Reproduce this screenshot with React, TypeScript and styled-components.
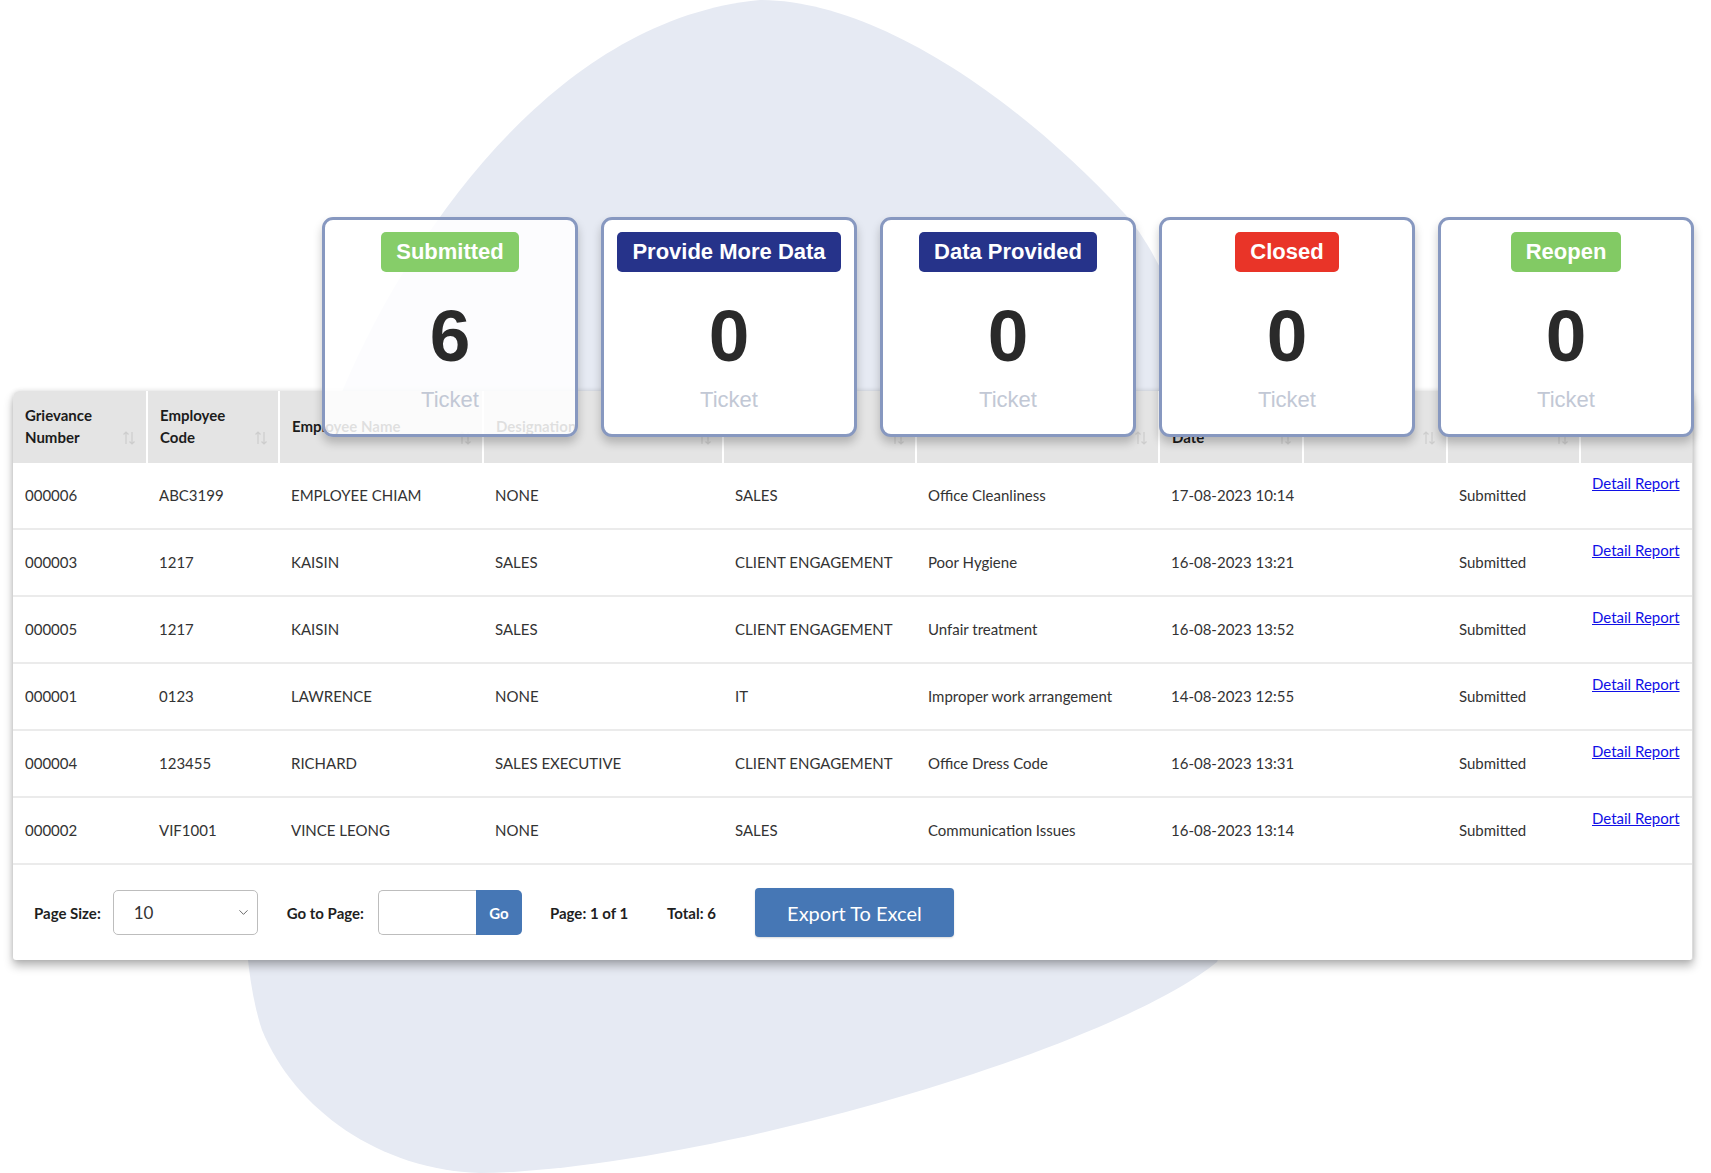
import React from "react";
import styled, { createGlobalStyle } from "styled-components";
import { ChevronDown } from "lucide-react";

const GlobalStyle = createGlobalStyle`
  html, body {
    margin: 0;
    padding: 0;
    background: #ffffff;
  }
  body {
    font-family: Lato, "Liberation Sans", sans-serif;
  }
`;

interface IStatusCard {
  label: string;
  color: string;
  count: number;
  faded?: boolean;
}

interface IGrievance {
  number: string;
  code: string;
  name: string;
  designation: string;
  department: string;
  type: string;
  submitted: string;
  closed: string;
  status: string;
}

const cards: IStatusCard[] = [
  { label: "Submitted", color: "#86cd69", count: 6, faded: true },
  { label: "Provide More Data", color: "#26338a", count: 0 },
  { label: "Data Provided", color: "#26338a", count: 0 },
  { label: "Closed", color: "#e93428", count: 0 },
  { label: "Reopen", color: "#82ca64", count: 0 },
];

const rows: IGrievance[] = [
  { number: "000006", code: "ABC3199", name: "EMPLOYEE CHIAM", designation: "NONE", department: "SALES", type: "Office Cleanliness", submitted: "17-08-2023 10:14", closed: "", status: "Submitted" },
  { number: "000003", code: "1217", name: "KAISIN", designation: "SALES", department: "CLIENT ENGAGEMENT", type: "Poor Hygiene", submitted: "16-08-2023 13:21", closed: "", status: "Submitted" },
  { number: "000005", code: "1217", name: "KAISIN", designation: "SALES", department: "CLIENT ENGAGEMENT", type: "Unfair treatment", submitted: "16-08-2023 13:52", closed: "", status: "Submitted" },
  { number: "000001", code: "0123", name: "LAWRENCE", designation: "NONE", department: "IT", type: "Improper work arrangement", submitted: "14-08-2023 12:55", closed: "", status: "Submitted" },
  { number: "000004", code: "123455", name: "RICHARD", designation: "SALES EXECUTIVE", department: "CLIENT ENGAGEMENT", type: "Office Dress Code", submitted: "16-08-2023 13:31", closed: "", status: "Submitted" },
  { number: "000002", code: "VIF1001", name: "VINCE LEONG", designation: "NONE", department: "SALES", type: "Communication Issues", submitted: "16-08-2023 13:14", closed: "", status: "Submitted" },
];

const columns: { title: string; width: number; sortable: boolean }[] = [
  { title: "Grievance Number", width: 134, sortable: true },
  { title: "Employee Code", width: 132, sortable: true },
  { title: "Employee Name", width: 204, sortable: true },
  { title: "Designation", width: 240, sortable: true },
  { title: "Department", width: 193, sortable: true },
  { title: "Grievance Type", width: 243, sortable: true },
  { title: "Submitted Date", width: 144, sortable: true },
  { title: "Closed Date", width: 144, sortable: true },
  { title: "Status", width: 133, sortable: true },
  { title: "Action", width: 113, sortable: false },
];

const Page = styled.div`
  position: relative;
  width: 1711px;
  height: 1173px;
  overflow: hidden;
  background: #ffffff;
`;

const Blob = styled.svg`
  position: absolute;
  top: 0;
  left: 0;
  width: 1711px;
  height: 1173px;
`;

const Content = styled.div`
  position: relative;
  padding-top: 217px;
`;

const CardsRow = styled.div`
  position: relative;
  z-index: 2;
  display: flex;
  gap: 23px;
  margin-left: 322px;
`;

const Card = styled.div<{ $faded?: boolean }>`
  width: 256px;
  height: 220px;
  box-sizing: border-box;
  border: 3px solid #8798c0;
  border-radius: 11px;
  background: ${(props) => (props.$faded ? "rgba(255, 255, 255, 0.86)" : "#ffffff")};
  box-shadow: 0 6px 10px rgba(0, 0, 0, 0.22);
  display: flex;
  flex-direction: column;
  align-items: center;
  font-family: "Liberation Sans", Arial, sans-serif;
`;

const Badge = styled.div<{ $bg: string }>`
  margin-top: 12px;
  height: 40px;
  padding: 0 15px;
  border-radius: 5px;
  background: ${(props) => props.$bg};
  color: #ffffff;
  font-size: 22px;
  font-weight: 700;
  display: flex;
  align-items: center;
`;

const Count = styled.div`
  margin-top: 28px;
  font-size: 73px;
  line-height: 72px;
  font-weight: 700;
  color: #2a2a2a;
`;

const TicketLabel = styled.div`
  margin-top: 15px;
  font-size: 22px;
  line-height: 26px;
  color: #c2c8d5;
`;

const Panel = styled.div`
  position: relative;
  z-index: 1;
  margin: -46px 0 0 13px;
  width: 1680px;
  background: #ffffff;
  border-radius: 6px 6px 3px 3px;
  border-right: 1px solid #dcdcdc;
  box-sizing: border-box;
  overflow: hidden;
  box-shadow: 0 6px 10px rgba(0, 0, 0, 0.28), 0 0 5px rgba(0, 0, 0, 0.12);
`;

const Table = styled.table`
  width: 100%;
  border-collapse: collapse;
  table-layout: fixed;
`;

const HeadCell = styled.th`
  height: 69px;
  padding: 0 10px 3px 12px;
  background: #e4e4e4;
  border-left: 2px solid #ffffff;
  text-align: left;
  vertical-align: middle;
  font-size: 15px;
  line-height: 22px;
  font-weight: 700;
  color: #1c1c1c;

  &:first-child {
    border-left: none;
  }
`;

const HeadInner = styled.div`
  display: grid;
  grid-template-columns: 1fr 14px;
  height: 44px;
  column-gap: 4px;
`;

const HeadText = styled.span`
  align-self: center;
`;

const SortIcon = styled.svg`
  align-self: end;
  margin-bottom: 2px;
`;

const Row = styled.tr`
  border-bottom: 2px solid #ebebeb;
`;

const Cell = styled.td`
  height: 63px;
  padding: 0 12px 2px;
  font-size: 15px;
  color: #333333;
  white-space: nowrap;
  vertical-align: middle;
`;

const LinkCell = styled(Cell)`
  vertical-align: top;
  padding-top: 11px;
  height: 52px;
`;

const ReportLink = styled.a`
  color: #1010e6;
  text-decoration: underline;
  font-size: 15px;
`;

const Footer = styled.div`
  display: flex;
  align-items: center;
  height: 95px;
  padding: 0 21px;
`;

const Label = styled.span<{ $gap?: number }>`
  margin-left: ${(props) => props.$gap ?? 0}px;
  font-size: 15px;
  font-weight: 700;
  color: #1f1f1f;
`;

const SelectBox = styled.div`
  margin-left: 12px;
  width: 145px;
  height: 45px;
  box-sizing: border-box;
  border: 1px solid #bdbdbd;
  border-radius: 5px;
  display: flex;
  align-items: center;
  justify-content: space-between;
  padding: 0 6px 0 20px;
  font-size: 17px;
  color: #333333;
`;

const InputGroup = styled.div`
  margin-left: 14px;
  display: flex;
  height: 45px;
`;

const PageInput = styled.div`
  width: 98px;
  box-sizing: border-box;
  border: 1px solid #bdbdbd;
  border-right: none;
  border-radius: 5px 0 0 5px;
`;

const GoButton = styled.div`
  width: 46px;
  background: #4677b5;
  border-radius: 0 5px 5px 0;
  color: #ffffff;
  font-size: 15px;
  font-weight: 700;
  display: flex;
  align-items: center;
  justify-content: center;
`;

const ExportButton = styled.div`
  margin-left: 39px;
  width: 199px;
  height: 49px;
  background: #4677b5;
  border-radius: 4px;
  color: #ffffff;
  font-size: 20px;
  display: flex;
  align-items: center;
  justify-content: center;
  box-shadow: 0 1px 2px rgba(0, 0, 0, 0.15);
`;

const Sort = () => (
  <SortIcon width="14" height="16" viewBox="0 0 14 16" fill="none" stroke="#cdcdcd" strokeWidth="1.2">
    <path d="M4 14V2M1.5 4.5L4 2l2.5 2.5" />
    <path d="M10 2v12M7.5 11.5L10 14l2.5-2.5" />
  </SortIcon>
);

const App: React.FC = () => {
  return (
    <Page>
      <GlobalStyle />
      <Blob viewBox="0 0 1711 1173">
        <path
          fill="#e6eaf3"
          d="M760 0 C870 0 1010 90 1124 213 C1224 321 1300 760 1217 962 C1110 1050 700 1170 480 1173 C380 1170 295 1110 262 1030 C222 910 250 620 344 387 C400 255 545 20 760 0 Z"
        />
      </Blob>
      <Content>
        <CardsRow>
          {cards.map((card) => (
            <Card key={card.label} $faded={card.faded}>
              <Badge $bg={card.color}>{card.label}</Badge>
              <Count>{card.count}</Count>
              <TicketLabel>Ticket</TicketLabel>
            </Card>
          ))}
        </CardsRow>
        <Panel>
          <Table>
            <colgroup>
              {columns.map((col) => (
                <col key={col.title} style={{ width: col.width }} />
              ))}
            </colgroup>
            <thead>
              <tr>
                {columns.map((col) => (
                  <HeadCell key={col.title}>
                    <HeadInner>
                      <HeadText>{col.title}</HeadText>
                      {col.sortable ? <Sort /> : <span />}
                    </HeadInner>
                  </HeadCell>
                ))}
              </tr>
            </thead>
            <tbody>
              {rows.map((row) => (
                <Row key={row.number}>
                  <Cell>{row.number}</Cell>
                  <Cell>{row.code}</Cell>
                  <Cell>{row.name}</Cell>
                  <Cell>{row.designation}</Cell>
                  <Cell>{row.department}</Cell>
                  <Cell>{row.type}</Cell>
                  <Cell>{row.submitted}</Cell>
                  <Cell>{row.closed}</Cell>
                  <Cell>{row.status}</Cell>
                  <LinkCell>
                    <ReportLink href="#">Detail Report</ReportLink>
                  </LinkCell>
                </Row>
              ))}
            </tbody>
          </Table>
          <Footer>
            <Label>Page Size:</Label>
            <SelectBox>
              10
              <ChevronDown size={15} strokeWidth={1.4} color="#555" />
            </SelectBox>
            <Label $gap={29}>Go to Page:</Label>
            <InputGroup>
              <PageInput />
              <GoButton>Go</GoButton>
            </InputGroup>
            <Label $gap={28}>Page: 1 of 1</Label>
            <Label $gap={39}>Total: 6</Label>
            <ExportButton>Export To Excel</ExportButton>
          </Footer>
        </Panel>
      </Content>
    </Page>
  );
};

export default App;
